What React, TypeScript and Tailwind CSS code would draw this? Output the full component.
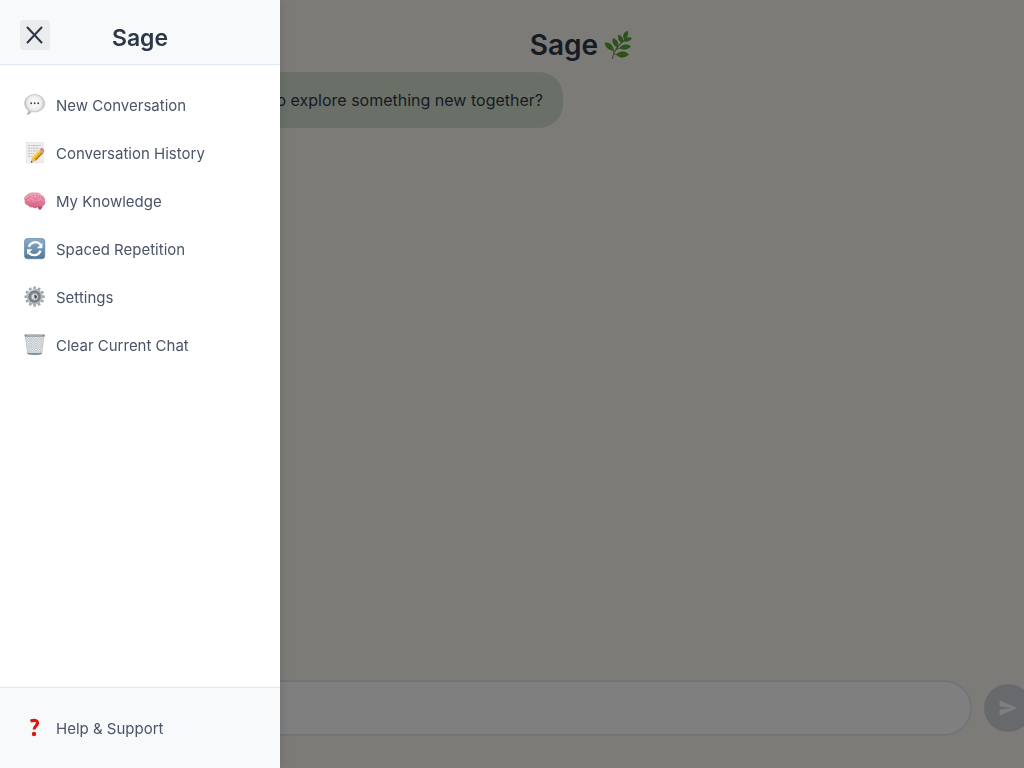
import React from "react";

function SpeechIcon() {
  return (
    <svg viewBox="0 0 22 22" className="size-[22px] shrink-0" aria-hidden="true">
      <defs>
        <radialGradient id="speech" cx="50%" cy="42%" r="58%">
          <stop offset="0" stopColor="#ffffff" />
          <stop offset="0.6" stopColor="#ededed" />
          <stop offset="1" stopColor="#a8a8a8" />
        </radialGradient>
      </defs>
      <path d="M10.700.5C16.400.5 20.600 4.200 20.600 9.300S16.400 18 10.700 18c-1 0-2-.1-3-.4-1 1.500-2.600 2.700-4.800 3.100 1.100-1.200 1.500-2.700 1.300-4.400C1.900 14.800.6 12.200.6 9.300.6 4.200 5 .5 10.700.5Z" fill="url(#speech)" stroke="#b0b0b0" strokeWidth=".5" />
      <circle cx="7.200" cy="9.300" r=".95" fill="#444" />
      <circle cx="10.700" cy="9.300" r=".95" fill="#444" />
      <circle cx="14.200" cy="9.300" r=".95" fill="#444" />
    </svg>
  );
}

function MemoIcon() {
  return (
    <svg viewBox="0 0 22 22" className="size-[22px] shrink-0" aria-hidden="true">
      <path d="M2.300.5h17v20.300h-17Z" fill="#eeeeee" stroke="#d8d8d8" strokeWidth=".5" />
      <path d="M4 3.500h13M4 6.200h11M4 8.900h9M4 11.600h6M4 14.300h4" stroke="#b0b0b0" strokeWidth=".8" strokeDasharray="2 .7 1.200 .6 2.800 .5" />
      <path d="m6.800 20.700 1.200-5.500 3.800 3.500Z" fill="#e7bd86" />
      <path d="m6.800 20.700.5-2 1.300 1.200Z" fill="#333" />
      <path d="m8 15.200 7.300-7.500 3.600 3.500-7.100 7.500Z" fill="#f3b51c" />
      <path d="m8 15.200 7.300-7.500 1.100 1.100-7.300 7.500Z" fill="#ffdc58" />
      <path d="m10.700 17.700 7.200-7.500 1 1-7.100 7.500Z" fill="#b97a08" />
      <path d="m15.300 7.700.8-.8 3.600 3.500-.8.8Z" fill="#8fa8b5" />
      <path d="m16.100 6.900.6-.6c1.500-1.200 4.400 1.600 3.400 3.400l-.4.700Z" fill="#e77e78" />
    </svg>
  );
}

function BrainIcon() {
  return (
    <svg viewBox="0 0 22 22" className="size-[22px] shrink-0" aria-hidden="true">
      <defs>
        <linearGradient id="brain" x1="0" y1="0" x2="0" y2="1">
          <stop offset="0" stopColor="#f9b1c2" />
          <stop offset="1" stopColor="#d75f83" />
        </linearGradient>
      </defs>
      <path d="M13.500 15c2 1.200 4.300 1.800 5.700.8l-2.100 3.400c-.9.900-2 .5-2.700-.2Z" fill="#b84b6d" />
      <path d="M1 10.600C-.2 8.500 1 5.700 3.400 4.800 5 2.800 8.400 2.200 10.600 3c2.700-.7 5.700.3 6.700 2.200 2.500.8 3.800 3.100 3.300 5.300 1 2.200.2 4.800-2.100 5.200-1.400 1.200-3 .8-4 .5-1.200 1.900-4.200 2.400-5.800.9-2 .5-3.600-.2-4-1.800C2.200 15.300.3 13.200 1 10.600Z" fill="url(#brain)" stroke="#c6577a" strokeWidth=".4" />
      <path d="M1.600 9.800c1.200.2 2-.5 2.200-1.700 1.200.1 2-.5 2.300-1.600M4.700 5.300c1-.1 1.700.3 2 .9M8 3.800c.2 1.500 1.400 2.200 2.900 1.800M12 3.800c1.800 1 1.700 2.800.2 4M14.700 5.100c1 .8 1.100 2 .5 2.900M8 7.300c1.300-.4 2.400.5 2.400 1.800 1.500.2 2.700-.2 3.500-1.100M17.400 6.500c-.1 1.400.4 2.300 1.800 3M2.300 12.500c1-.9 2.400-.7 3.100.3 1-.2 1.800-.9 2-1.900M5 15.200c1.100.2 2-.2 2.600-1 1.900.3 3.500-.2 4.600-1.600 1.700.4 3.200-.1 4-1.400 1 .2 2 .9 2.300 2M10 16.500c1.100-.1 2-.7 2.300-1.700" fill="none" stroke="#c2557a" strokeWidth=".5" strokeLinecap="round" />
    </svg>
  );
}

function CycleIcon() {
  return (
    <svg viewBox="0 0 22 22" className="size-[22px] shrink-0" aria-hidden="true">
      <defs>
        <linearGradient id="cycle" x1="0" y1="0" x2="0" y2="1">
          <stop offset="0" stopColor="#8dacc8" />
          <stop offset="1" stopColor="#507799" />
        </linearGradient>
      </defs>
      <rect x=".5" y=".5" width="20.300" height="20.300" rx="3" fill="url(#cycle)" stroke="#527a9c" strokeWidth=".6" />
      <path d="M4.800 8.800c1.800-5 8.200-6.200 11.700-2.300" fill="none" stroke="#fff" strokeWidth="2.300" />
      <path d="M18.400 4.800v5.400h-5.600Z" fill="#fff" />
      <path d="M16.600 12.700c-1.800 4.900-8.200 6-11.700 2.200" fill="none" stroke="#fff" strokeWidth="2.300" />
      <path d="M3 16.600v-5.400h5.600Z" fill="#fff" />
    </svg>
  );
}

const TEETH = [0, 30, 60, 90, 120, 150, 180, 210, 240, 270, 300, 330];

function GearIcon() {
  return (
    <svg viewBox="0 0 22 22" className="size-[22px] shrink-0" aria-hidden="true">
      {TEETH.map((angle) => (
        <path key={angle} d="m9.100 4.500.3-4h2.500l.3 4Z" fill="#a4a9af" transform={`rotate(${angle} 10.650 10.650)`} />
      ))}
      <circle cx="10.650" cy="10.650" r="7.800" fill="#b3b8bd" />
      <circle cx="10.650" cy="10.650" r="5.300" fill="#878d94" stroke="#737a81" strokeWidth="1.600" />
      <circle cx="10.650" cy="10.650" r="3.500" fill="#d8dadc" stroke="#7c8288" strokeWidth=".5" />
      <path d="M10.300 8.800c1.800 0 2.700 1 2.700 2s-1 1.800-2.400 1.800Z" fill="#42474d" />
      <path d="M4.100 7.400a7.300 7.300 0 0 1 6.500-4" fill="none" stroke="#e3e5e7" strokeWidth="1" />
    </svg>
  );
}

function TrashIcon() {
  return (
    <svg viewBox="0 0 22 22" className="size-[22px] shrink-0" aria-hidden="true">
      <defs>
        <pattern id="mesh" width="2.400" height="2.400" patternUnits="userSpaceOnUse">
          <rect width="2.400" height="2.400" fill="#eceeef" />
          <path d="m0 0 2.400 2.400M2.400 0 0 2.400" stroke="#969ea4" strokeWidth=".4" />
        </pattern>
      </defs>
      <path d="M1.200 2h18.900l-2.400 17.800c-2.600 1.200-11.500 1.200-14.100 0Z" fill="url(#mesh)" stroke="#a9afb3" strokeWidth=".5" />
      <path d="M3.600 18.700c3 .8 11.100.8 14.100 0l-.2 1.300c-3 1-10.700 1-13.700 0Z" fill="#687f98" />
      <rect x=".4" y=".6" width="20.500" height="1.900" rx=".9" fill="#7d858c" />
      <path d="M2.500 1.500h16.300" stroke="#c4c8ca" strokeWidth=".6" />
    </svg>
  );
}

function QuestionIcon() {
  return (
    <svg viewBox="0 0 22 22" className="size-[22px] shrink-0" aria-hidden="true">
      <path d="M6.500 4.200c3.600-1.600 7-.9 7 1.800 0 3-3.400 3.100-3.400 6.600" fill="none" stroke="#e3120b" strokeWidth="3.100" />
      <circle cx="10" cy="17" r="2.200" fill="#e3120b" />
    </svg>
  );
}

function HerbIcon() {
  return (
    <svg viewBox="0 0 30 30" className="size-[30px] shrink-0" aria-hidden="true">
      <path d="M8.500 28.500C9 21 14 15.500 22.500 8.500M10.500 23C9 19 6 15.500 4 13.500M13 19.500c1-4 0-7-1-9M18 12.500V8M13 18.500l8-1M10 24l10 1" fill="none" stroke="#7d9a5a" strokeWidth="1.200" strokeLinecap="round" />
      <g fill="#50a02c">
        <path d="M.8 12.500c4.500-.5 9 3 9 8.300C5 20.500 1 17.500.8 12.500Z" />
        <path d="M9 8c4.500 2 6.500 5.700 4.500 9.500C9.500 15.500 7.500 12 9 8Z" />
        <path d="M14.500 4.500c4 2 5.500 5 3.500 8.500-3.500-1.700-4.700-5-3.500-8.500Z" />
        <path d="M23.500.8c1.500 3.500.3 6.700-3.500 8.400-1.800-3.500-.5-6.700 3.500-8.400Z" />
        <path d="M28 8c-2 3.500-5.500 4.500-9.200 3.300C20.500 7.500 24 6.500 28 8Z" />
        <path d="M27 16.500c-3.500 3.500-7.500 4-11.500 1.500 3.500-4 7.500-4.500 11.500-1.500Z" />
        <path d="M25 24.500c-4 4-9 4-13 .2 4-4.200 9-4.200 13-.2Z" />
      </g>
      <path d="m3 14.500 5.500 4.500M10 10l3 6M15.500 7l2 4.500M23 3l-2.500 5M26 8.500l-5.500 2M24.500 16.500l-7 1.300M23 24.500l-9 .2" stroke="#83c05e" strokeWidth=".5" strokeLinecap="round" />
    </svg>
  );
}

const MENU = [
  { label: "New Conversation", Icon: SpeechIcon },
  { label: "Conversation History", Icon: MemoIcon },
  { label: "My Knowledge", Icon: BrainIcon },
  { label: "Spaced Repetition", Icon: CycleIcon },
  { label: "Settings", Icon: GearIcon },
  { label: "Clear Current Chat", Icon: TrashIcon },
];

function MenuRow({ label, Icon }: { label: string; Icon: () => React.ReactElement }) {
  return (
    <button type="button" className="flex h-12 w-full items-center gap-2.5 px-6 text-left text-[15px] text-[#4a5568]">
      <Icon />
      <span className="pt-0.5">{label}</span>
    </button>
  );
}

export default function App() {
  return (
    <div className="min-h-screen overflow-hidden bg-[#f9f6ee] font-['Inter',sans-serif] text-[#2d3748]">
      <main className="flex h-screen flex-col pb-8">
        <header className="flex h-[72px] items-end justify-center gap-1.5 pb-3 pl-[140px]">
          <h1 className="text-[28px] leading-[30px] font-semibold">Sage</h1>
          <HerbIcon />
        </header>
        <section className="flex-1">
          <p className="flex h-14 w-[563px] max-w-full items-center justify-end rounded-r-3xl bg-[#d5e1cf] pr-5 text-base">
            to explore something new together?
          </p>
        </section>
        <form className="flex items-center gap-3" onSubmit={(e) => e.preventDefault()}>
          <input aria-label="Message" className="h-14 min-w-0 flex-1 rounded-full border-2 border-[#e2e8f0] bg-white pr-6 pl-[300px] outline-none" />
          <button type="submit" aria-label="Send" className="-mr-2 flex size-12 shrink-0 items-center justify-center rounded-full bg-[#d0d3d9]">
            <svg viewBox="0 0 24 24" className="size-5" fill="#fff" aria-hidden="true">
              <path d="M2.010 21 23 12 2.010 3 2 10l15 2-15 2z" />
            </svg>
          </button>
        </form>
      </main>

      <div className="fixed inset-0 bg-black/50" />

      <aside className="fixed inset-y-0 left-0 flex w-[280px] flex-col bg-white shadow-[2px_0_10px_rgba(0,0,0,0.1)]">
        <header className="grid h-[65px] grid-cols-[30px_1fr_30px] items-start border-b border-[#e2e8f0] bg-[#f7f9fb] px-5 pt-5">
          <button type="button" aria-label="Close menu" className="flex size-[30px] items-center justify-center rounded bg-[#ebeced]">
            <svg viewBox="0 0 20 20" className="size-5" fill="none" stroke="#2d3748" strokeWidth="2" strokeLinecap="round" aria-hidden="true">
              <path d="m2.500 2.500 14 15M16.500 2.500l-14 15" />
            </svg>
          </button>
          <h2 className="pt-0.5 text-center text-[23px] leading-8 font-semibold">Sage</h2>
        </header>
        <nav className="flex-1 py-4" aria-label="Main menu">
          {MENU.map((item) => (
            <MenuRow key={item.label} {...item} />
          ))}
        </nav>
        <footer className="border-t border-[#e2e8f0] bg-[#f7f9fb] py-4">
          <MenuRow label="Help & Support" Icon={QuestionIcon} />
        </footer>
      </aside>
    </div>
  );
}
